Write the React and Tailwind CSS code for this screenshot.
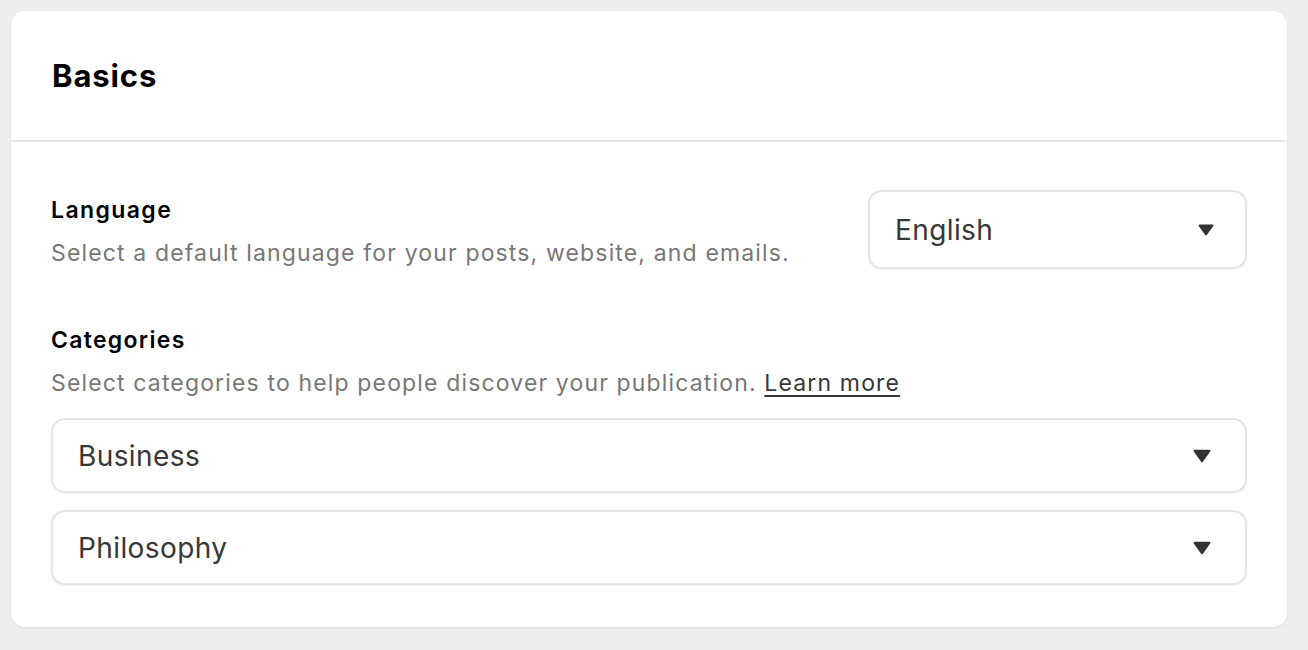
import React from "react";

const Caret = ({ w = 16, h = 12 }) => (
  <svg width={w} height={h} viewBox="0 0 16 12" className="shrink-0">
    <path d="M1.5 1.5 H14.5 L8 10.5 Z" fill="#333" stroke="#333" strokeWidth="2" strokeLinejoin="round" />
  </svg>
);

function Select({ value, className = "", big = false }) {
  return (
    <div
      className={`flex items-center justify-between bg-white border-2 border-[#e5e5e5] rounded-[14px] shadow-[0_1px_2px_rgba(0,0,0,0.06)] pl-[25px] ${className}`}
    >
      <span className="text-[28px] text-[#363737] leading-none tracking-[0.4px]">{value}</span>
      {big ? <Caret w={18} h={14} /> : <Caret />}
    </div>
  );
}

export default function App() {
  return (
    <div
      className="min-h-[650px] bg-[#eeeeee] p-[11px] pr-[21px] pb-[24px]"
      style={{ fontFamily: "Inter, 'Noto Sans', sans-serif" }}
    >
      <div className="bg-white rounded-[14px] shadow-[0_1px_3px_rgba(0,0,0,0.08)]">
        <div className="h-[131px] flex items-center px-[41px] pt-[2px] border-b-2 border-[#e6e6e6]">
          <h2 className="text-[31px] font-bold text-black tracking-[0.9px]">Basics</h2>
        </div>

        <div className="px-[40px] pt-[48px] pb-[42px]">
          <div className="flex items-start justify-between">
            <div className="pt-[5px]">
              <div className="text-[23px] font-semibold text-black leading-[30px] tracking-[1.4px]">Language</div>
              <p className="text-[23px] text-[#777] leading-[30px] mt-[13px] tracking-[1.15px]">
                Select a default language for your posts, website, and emails.
              </p>
            </div>
            <Select value="English" className="w-[379px] h-[79px] pr-[31px]" />
          </div>

          <div className="mt-[56px]">
            <div className="text-[23px] font-semibold text-black leading-[30px] tracking-[1.3px]">Categories</div>
            <p className="text-[23px] text-[#777] leading-[30px] mt-[13px] tracking-[1.15px]">
              Select categories to help people discover your publication.{" "}
              <a className="text-[#363737] underline underline-offset-[4px] decoration-[2px]">Learn more</a>
            </p>
            <div className="flex flex-col gap-[17px] mt-[20px]">
              <Select value="Business" big className="h-[75px] pr-[34px]" />
              <Select value="Philosophy" big className="h-[75px] pr-[34px]" />
            </div>
          </div>
        </div>
      </div>
    </div>
  );
}
